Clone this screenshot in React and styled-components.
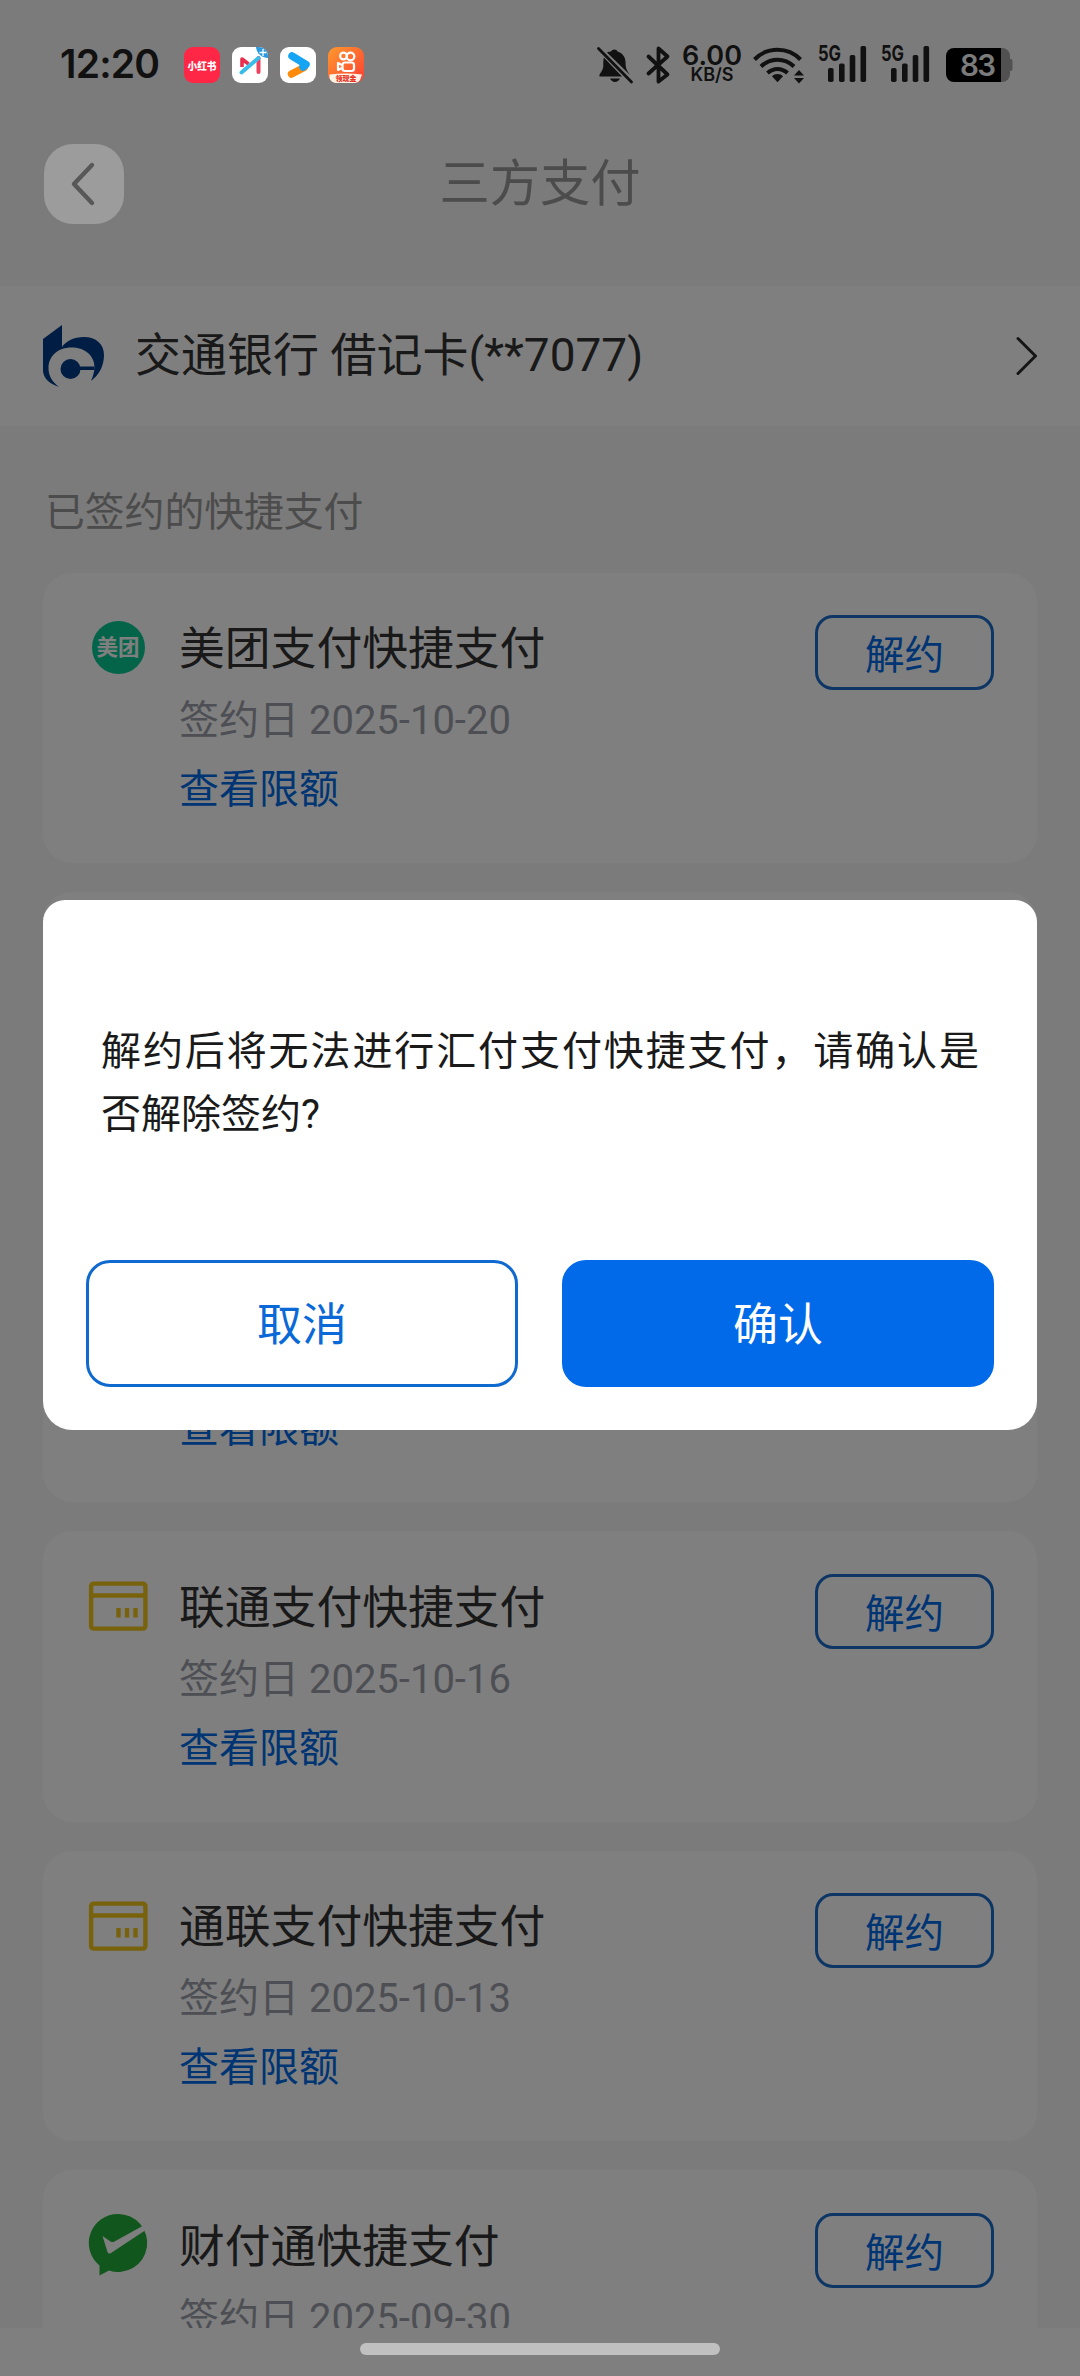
import styled, { createGlobalStyle } from 'styled-components';

const GlobalStyle = createGlobalStyle`
  body {
    margin: 0;
    font-family: Roboto, 'Noto Sans CJK SC', sans-serif;
  }

  * {
    box-sizing: border-box;
  }
`;

const Phone = styled.div`
  position: relative;
  display: flex;
  flex-direction: column;
  width: 1080px;
  height: 2376px;
  overflow: hidden;
  background: #f6f6f6;
`;

const Mask = styled.div`
  position: absolute;
  inset: 0;
  z-index: 1;
  display: flex;
  flex-direction: column;
  align-items: center;
  padding-top: 900px;
  background: rgba(0, 0, 0, 0.5);
`;

/* status bar and title stay above the mask */
const Top = styled.div`
  position: relative;
  z-index: 2;
  height: 286px;
  flex: none;
`;

const StatusBar = styled.div`
  display: flex;
  align-items: center;
  justify-content: space-between;
  height: 130px;
  padding: 0 67px 0 60px;
  font-family: Inter, sans-serif;
  color: #111;
`;

const StatusGroup = styled.div`
  display: flex;
  align-items: center;
`;

const Clock = styled.div`
  width: 124px;
  font-size: 39px;
  font-weight: 600;
  line-height: 48px;
  letter-spacing: -0.8px;
  margin-top: -2px;
`;

const AppIcon = styled.svg`
  width: 36px;
  height: 36px;
  margin-right: 12px;
`;

const Glyph = styled.svg`
  display: block;
  flex: none;
  overflow: visible;
  margin-left: ${(p) => p.$gap || 0}px;
`;

const NetSpeed = styled.div`
  display: flex;
  flex-direction: column;
  align-items: center;
  width: 60px;
  margin-left: 11px;
  margin-top: -4px;
  font-size: 27px;
  font-weight: 600;
  line-height: 23px;
`;

const NetUnit = styled.span`
  font-size: 18px;
  line-height: 15px;
`;

const NavBar = styled.div`
  display: flex;
  align-items: center;
  justify-content: space-between;
  height: 108px;
  padding: 0 44px;
`;

const BackButton = styled.button`
  display: flex;
  align-items: center;
  justify-content: center;
  width: 80px;
  height: 80px;
  padding: 0 3px 0 0;
  border: 0;
  border-radius: 29px;
  background: #9c9c9c;
`;

const NavTitle = styled.h1`
  margin: 0;
  font-size: 50.3px;
  font-weight: 400;
  line-height: 60px;
  color: #4c4c4c;
`;

const NavSpacer = styled.div`
  width: 80px;
`;

const BankRow = styled.div`
  display: flex;
  align-items: center;
  flex: none;
  height: 140px;
  padding: 0 42px 0 43px;
  background: #fff;
`;

const BankName = styled.div`
  flex: 1;
  margin-left: 30px;
  font-size: 46px;
  line-height: 60px;
  margin-top: -2px;
  color: #333;
`;

const SectionLabel = styled.div`
  flex: none;
  padding: 57px 0 29.500px 45px;
  font-size: 39.8px;
  line-height: 60px;
  color: #999;
`;

const List = styled.div`
  display: flex;
  flex-direction: column;
  flex: 1;
  gap: 29px;
  min-height: 0;
  padding: 0 43px;
  overflow: hidden;
`;

const Card = styled.div`
  display: flex;
  flex: none;
  height: 290.5px;
  padding: 42px 43px 0 46px;
  border-radius: 29px;
  background: #fff;
`;

const CardIcon = styled.div`
  flex: none;
  width: 58px;
  height: 66px;
  display: flex;
  align-items: center;
  justify-content: center;
`;

const CardBody = styled.div`
  flex: 1;
  margin: 2.5px 0 0 32px;
`;

const CardTitle = styled.div`
  height: 66px;
  font-size: 45.8px;
  line-height: 66px;
  color: #333;
`;

const CardDate = styled.div`
  height: 60px;
  margin-top: 8px;
  font-size: 40px;
  line-height: 60px;
  color: #9a9ea8;
`;

const CardLink = styled.div`
  margin-top: 9px;
  font-size: 40px;
  line-height: 60px;
  color: #006ae9;
`;

const ReleaseButton = styled.button`
  width: 179px;
  height: 75px;
  margin-top: 0.5px;
  padding: 0 0 2px;
  border: 3px solid #1b6cc8;
  border-radius: 18px;
  background: transparent;
  font-family: inherit;
  font-size: 39.5px;
  color: #006ae9;
`;

const Meituan = styled.div`
  display: flex;
  align-items: center;
  justify-content: center;
  width: 53px;
  height: 53px;
  border-radius: 50%;
  background: #06c893;
  font-size: 21.5px;
  font-weight: 700;
  line-height: 22px;
  color: #fff;
`;

const Footer = styled.div`
  position: relative;
  z-index: 2;
  display: flex;
  justify-content: center;
  flex: none;
  height: 48px;
  padding-top: 15px;
  background: #7f7f7f;
`;

const HomeBar = styled.div`
  width: 360px;
  height: 12px;
  border-radius: 6px;
  background: #c0c0c0;
`;

const Dialog = styled.div`
  display: flex;
  flex-direction: column;
  justify-content: space-between;
  width: 994px;
  height: 530px;
  padding: 120px 43px 43px;
  border-radius: 22px 22px 29px 29px;
  background: #fff;
`;

const Message = styled.p`
  margin: 0 15px;
  font-size: 40px;
  line-height: 63px;
  text-align: justify;
  color: #1a1a1a;
`;

const Actions = styled.div`
  display: flex;
  gap: 44px;
`;

const ActionButton = styled.button`
  flex: 1;
  height: 127px;
  padding: 0 0 4px;
  border: 3px solid ${(p) => (p.$primary ? '#006ae9' : '#1069cf')};
  border-radius: 24px;
  background: ${(p) => (p.$primary ? '#006ae9' : '#fff')};
  font-family: inherit;
  font-size: 45px;
  color: ${(p) => (p.$primary ? '#fff' : '#0a69d6')};
`;

// the second and third entries sit behind the dialog
const contracts = [
  { id: 1, name: '美团支付快捷支付', date: '2025-10-20', icon: 'meituan', link: true },
  { id: 2 },
  { id: 3, link: true },
  { id: 4, name: '联通支付快捷支付', date: '2025-10-16', icon: 'card', link: true },
  { id: 5, name: '通联支付快捷支付', date: '2025-10-13', icon: 'card', link: true },
  { id: 6, name: '财付通快捷支付', date: '2025-09-30', icon: 'wechat' },
];

function AppIcons() {
  return (
    <>
      <AppIcon viewBox="0 0 36 36">
        <rect width="36" height="36" rx="9" fill="#ff2745" />
        <text x="18" y="22.500" fontSize="10.500" fontWeight="900" fill="#fff" textAnchor="middle" textLength="29" lengthAdjust="spacingAndGlyphs" fontFamily="Noto Sans CJK SC, sans-serif">小红书</text>
      </AppIcon>
      <AppIcon viewBox="0 0 36 36">
        <rect width="36" height="36" rx="9" fill="#fff" />
        <path d="M24 0h3a9 9 0 0 1 9 9v2A12 12 0 0 1 24 0z" fill="#2a9be0" />
        <path d="M31 2v7M27.500 5.500h7" stroke="#fff" strokeWidth="1.300" />
        <path d="M10 20V12l6.500 5" fill="none" stroke="#e8304e" strokeWidth="3.600" strokeLinejoin="round" />
        <path d="M26.500 11v14" stroke="#f0405e" strokeWidth="4" strokeLinecap="round" />
        <path d="M9.500 25.500L26.500 11" stroke="#3bbdea" strokeWidth="4" strokeLinecap="round" />
      </AppIcon>
      <AppIcon viewBox="0 0 36 36">
        <rect width="36" height="36" rx="9" fill="#fff" />
        <path d="M11.500 27L24 20.500" stroke="#ff8a0c" strokeWidth="7.500" strokeLinecap="round" />
        <path d="M12 9L26 17.500L23 20" stroke="#16a4f5" strokeWidth="7.500" strokeLinecap="round" strokeLinejoin="round" fill="none" />
      </AppIcon>
      <AppIcon viewBox="0 0 36 36">
        <defs>
          <linearGradient id="ks" x1="0" y1="0" x2="1" y2="1">
            <stop offset="0" stopColor="#ff9a2e" />
            <stop offset="1" stopColor="#ff3d33" />
          </linearGradient>
        </defs>
        <rect width="36" height="36" rx="9" fill="url(#ks)" />
        <g fill="none" stroke="#fff" strokeWidth="2.200">
          <circle cx="15.500" cy="9" r="3.400" />
          <circle cx="22.500" cy="9.500" r="3.800" />
          <rect x="14.500" y="15.500" width="11.500" height="8.500" rx="2.500" />
          <path d="M14 18l-4-2v7l4-2" strokeLinejoin="round" />
        </g>
        <path d="M1.500 27.500Q18 25.500 34 27.500L32 33q-2 3-6 3H9q-6 0-7.500-5z" fill="#fff3e6" />
        <text x="18" y="34" fontSize="7" fontWeight="900" fill="#e8321e" textAnchor="middle" fontFamily="Noto Sans CJK SC, sans-serif">领现金</text>
      </AppIcon>
    </>
  );
}

function BellOff() {
  return (
    <Glyph width="36" height="37" viewBox="0 0 36 37" fill="#111">
      <path d="M17.500 2.500c1.500 0 2.500.8 3 2 5 1.500 8 5.500 8 10.500 0 7 1.500 8.500 4.500 13L10 5.500c1-.6 2.700-.8 4-1 .5-1.200 2-2 3.500-2z" />
      <path d="M6.800 10.500L25 29.500H2.500c-.8-3 3.800-5 3.800-11 0-3 0-5.500.5-8z" />
      <path d="M13 31.500h10c-1.200 2.200-2.800 3.500-5 3.500s-3.800-1.300-5-3.500z" />
      <path d="M1.500 1.500l33 33.500" stroke="#111" strokeWidth="2.800" strokeLinecap="round" />
    </Glyph>
  );
}

function Bluetooth() {
  return (
    <Glyph $gap={13} width="25" height="38" viewBox="0 0 25 38" fill="none" stroke="#111" strokeWidth="3.800" strokeLinejoin="round" strokeLinecap="round">
      <path d="M2.500 10.500L21.500 28.500 12.500 35.500V2.500l9 8L2.500 27.500" />
    </Glyph>
  );
}

function Wifi() {
  return (
    <Glyph $gap={11} width="51" height="37" viewBox="0 0 51 37" fill="none" stroke="#111" strokeWidth="4">
      <path d="M1.500 12.500C14-.5 35-.5 47.500 12.500" />
      <path d="M8 19.500c9.500-9 23.500-9 33 0" />
      <path d="M14.500 26c6-5.500 14-5.500 20 0" />
      <path d="M24.500 27c-2.200 0-4 .8-5.500 2.200l5.500 6 5.500-6C28.500 27.800 26.700 27 24.500 27zM41 28.500l5-5.500 5 5.500zM41 31l5 5.500 5-5.500z" fill="#111" stroke="none" />
    </Glyph>
  );
}

function Signal({ gap }) {
  return (
    <Glyph $gap={gap} width="50" height="40" viewBox="0 0 50 40" fill="#111">
      <text x="0" y="16" fontSize="22" fontWeight="700" fontFamily="Inter, sans-serif" textLength="23" lengthAdjust="spacingAndGlyphs">5G</text>
      <rect x="10" y="23" width="5.600" height="14" rx="1.800" />
      <rect x="21" y="18.500" width="5.600" height="18.500" rx="1.800" />
      <rect x="31.700" y="10" width="5.600" height="27" rx="1.800" />
      <rect x="42.500" y="1" width="5.600" height="36" rx="1.800" />
    </Glyph>
  );
}

function Battery() {
  return (
    <Glyph $gap={15} width="67" height="34" viewBox="0 0 67 34">
      <path d="M55 0h1a8 8 0 0 1 8 8v18a8 8 0 0 1-8 8h-1z" fill="#515151" />
      <path d="M63 11h1.500a2 2 0 0 1 2 2v8a2 2 0 0 1-2 2H63z" fill="#515151" />
      <path d="M8 0h47v34H8a8 8 0 0 1-8-8V8a8 8 0 0 1 8-8z" fill="#000" />
      <text x="32" y="28" fontSize="29.500" fontWeight="600" fill="#7b7b7b" textAnchor="middle" textLength="36" fontFamily="Inter, sans-serif">83</text>
    </Glyph>
  );
}

function BankLogo() {
  return (
    <Glyph width="62" height="62" viewBox="0 0 62 62" fill="#003a86">
      <path d="M19 0v22c4-6 12-10 22-10 12 0 20 7 20 18 0 11-5 20-13 26 2-5 3.500-9 3.500-14C51.500 30 41 22.500 28.500 22.500 15 22.500 5.500 31 5.500 43c0 8 4 14 10.500 19C6 58.500 0 53 0 45V14z" />
      <circle cx="27.500" cy="44" r="10" />
      <path d="M35 41.500h16.500v3.500H35z" />
    </Glyph>
  );
}

function PayIcon({ type }) {
  if (type === 'meituan') {
    return <Meituan>美团</Meituan>;
  }
  if (type === 'wechat') {
    return (
      <Glyph width="58" height="62" viewBox="0 0 58 62">
        <path d="M29 0a29 29 0 1 1-9 56.500L10.500 61.500V51.500A29 29 0 0 1 29 0z" fill="#22ac38" />
        <path d="M13.500 22l8 5.500q2 1 4 0L53.500 12l2.500 4.500L22 39q-2.500 1.500-3.500-1z" fill="#fff" />
      </Glyph>
    );
  }
  return (
    <Glyph width="58" height="50" viewBox="0 0 58 50" fill="none" stroke="#f0c419" strokeWidth="4.400">
      <rect x="2.100" y="2.600" width="54.300" height="45" rx="2.500" />
      <path d="M2 14.500h54.500" />
      <path d="M29.500 27v9.500M38 27v9.500M46.500 27v9.500" />
    </Glyph>
  );
}

function ContractCard({ name, date, icon, link }) {
  return (
    <Card>
      <CardIcon>{icon && <PayIcon type={icon} />}</CardIcon>
      <CardBody>
        <CardTitle>{name}</CardTitle>
        <CardDate>{date && `签约日 ${date}`}</CardDate>
        {link && <CardLink>查看限额</CardLink>}
      </CardBody>
      {name && <ReleaseButton>解约</ReleaseButton>}
    </Card>
  );
}

export default function App() {
  return (
    <Phone>
      <GlobalStyle />
      <Top>
        <StatusBar>
          <StatusGroup>
            <Clock>12:20</Clock>
            <AppIcons />
          </StatusGroup>
          <StatusGroup>
            <BellOff />
            <Bluetooth />
            <NetSpeed>
              6.00
              <NetUnit>KB/S</NetUnit>
            </NetSpeed>
            <Wifi />
            <Signal gap={14} />
            <Signal gap={13} />
            <Battery />
          </StatusGroup>
        </StatusBar>
        <NavBar>
          <BackButton>
            <Glyph width="28" height="44" viewBox="0 0 28 44" fill="none" stroke="#585858" strokeWidth="4.400" strokeLinecap="round" strokeLinejoin="round">
              <path d="M23 3L5 22l18 19" />
            </Glyph>
          </BackButton>
          <NavTitle>三方支付</NavTitle>
          <NavSpacer />
        </NavBar>
      </Top>
      <BankRow>
        <BankLogo />
        <BankName>交通银行 借记卡(**7077)</BankName>
        <Glyph width="22" height="40" viewBox="0 0 22 40" fill="none" stroke="#2a2a2a" strokeWidth="3" strokeLinecap="round" strokeLinejoin="round">
          <path d="M2 2.500L19.500 20 2 37.500" />
        </Glyph>
      </BankRow>
      <SectionLabel>已签约的快捷支付</SectionLabel>
      <List>
        {contracts.map((item) => (
          <ContractCard key={item.id} {...item} />
        ))}
      </List>
      <Footer>
        <HomeBar />
      </Footer>
      <Mask>
        <Dialog>
          <Message>解约后将无法进行汇付支付快捷支付，请确认是否解除签约?</Message>
          <Actions>
            <ActionButton>取消</ActionButton>
            <ActionButton $primary>确认</ActionButton>
          </Actions>
        </Dialog>
      </Mask>
    </Phone>
  );
}
